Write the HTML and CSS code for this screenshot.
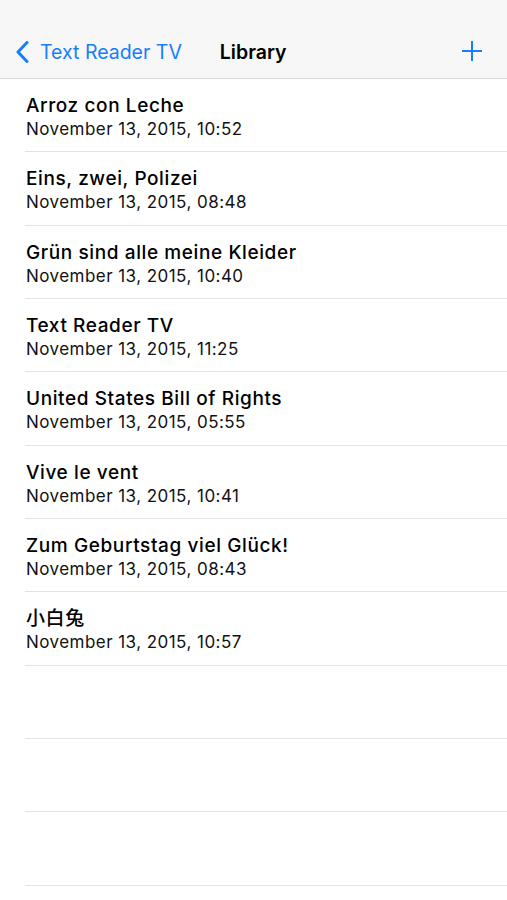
FILE: index.html
```html
<!DOCTYPE html>
<html lang="en">
<head>
    <meta charset="UTF-8">
    <title>Library</title>
    <meta name="viewport" content="width=device-width, initial-scale=1.0">
    <link rel="stylesheet" href="styles.css">
</head>
<body>

    <div class="navbar">
        <a class="nav-back" href="#">
            <svg class="chevron" width="13" height="22" viewBox="0 0 13 22">
                <polyline points="11,1.5 2,11 11,20.5" fill="none" stroke="#157efb" stroke-width="3" stroke-linecap="round" stroke-linejoin="round"/>
            </svg>
            <span>Text Reader TV</span>
        </a>
        <div class="nav-title">Library</div>
        <a class="nav-add" href="#">
            <svg width="22" height="22" viewBox="0 0 22 22">
                <path d="M11 1 V21 M1 11 H21" stroke="#157efb" stroke-width="2" fill="none"/>
            </svg>
        </a>
    </div>

    <ul class="list">
        <li class="row">
            <div class="row-title">Arroz con Leche</div>
            <div class="row-date">November 13, 2015, 10:52</div>
        </li>
        <li class="row">
            <div class="row-title">Eins, zwei, Polizei</div>
            <div class="row-date">November 13, 2015, 08:48</div>
        </li>
        <li class="row">
            <div class="row-title">Grün sind alle meine Kleider</div>
            <div class="row-date">November 13, 2015, 10:40</div>
        </li>
        <li class="row">
            <div class="row-title">Text Reader TV</div>
            <div class="row-date">November 13, 2015, 11:25</div>
        </li>
        <li class="row">
            <div class="row-title">United States Bill of Rights</div>
            <div class="row-date">November 13, 2015, 05:55</div>
        </li>
        <li class="row">
            <div class="row-title">Vive le vent</div>
            <div class="row-date">November 13, 2015, 10:41</div>
        </li>
        <li class="row">
            <div class="row-title">Zum Geburtstag viel Glück!</div>
            <div class="row-date">November 13, 2015, 08:43</div>
        </li>
        <li class="row">
            <div class="row-title">小白兔</div>
            <div class="row-date">November 13, 2015, 10:57</div>
        </li>
        <li class="row empty"></li>
        <li class="row empty"></li>
        <li class="row empty"></li>
    </ul>

</body>
</html>
```

FILE: styles.css
```css
* {
    margin: 0;
    padding: 0;
    box-sizing: border-box;
}

body {
    font-family: Inter, "Liberation Sans", "Noto Sans CJK SC", sans-serif;
    background-color: #fff;
    color: #000;
    width: 507px;
    height: 900px;
    overflow: hidden;
}

/* Pasek nawigacji */
.navbar {
    height: 79px;
    background-color: #f7f7f7;
    border-bottom: 1px solid #d9d9d9;
    display: flex;
    align-items: flex-end;
    padding: 0 24px 14px 16px;
}

.nav-back {
    display: flex;
    align-items: center;
    gap: 11px;
    color: #157efb;
    text-decoration: none;
    font-size: 19.5px;
}

.nav-title {
    margin-left: 38px;
    font-size: 19.5px;
    font-weight: 600;
}

.nav-add {
    margin-left: auto;
    display: flex;
    padding-bottom: 2px;
}

.list {
    list-style: none;
    padding-left: 25px;
}

.row {
    height: 73.33px;
    border-bottom: 1px solid #e3e3e3;
    padding: 15px 0 0 1px;
}

.row-title {
    font-size: 19px;
    font-weight: 500;
    line-height: 24px;
    letter-spacing: 0.6px;
}

.row-date {
    font-size: 17px;
    line-height: 22px;
    letter-spacing: 0.45px;
    color: #111;
}
```
